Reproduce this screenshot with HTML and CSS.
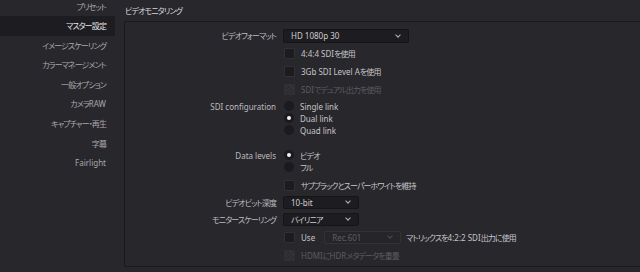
FILE: index.html
```html
<!DOCTYPE html>
<html>

<head>
    <meta charset="utf-8">
    <link rel="stylesheet" href="styles.css">
</head>

<body>
    <div class="page">
        <div class="sidebar">
            <div class="navItem ja">プリセット</div>
            <div class="navItem ja selected">マスター設定</div>
            <div class="navItem ja">イメージスケーリング</div>
            <div class="navItem ja">カラーマネージメント</div>
            <div class="navItem ja">一般オプション</div>
            <div class="navItem"><span class="ja">カメラ</span>RAW</div>
            <div class="navItem ja">キャプチャー・再生</div>
            <div class="navItem ja">字幕</div>
            <div class="navItem">Fairlight</div>
        </div>

        <div class="content">
            <div class="sectionTitle ja">ビデオモニタリング</div>
            <div class="box">
                <div class="row rowFormat">
                    <div class="label ja">ビデオフォーマット</div>
                    <div class="select wide"><span>HD 1080p 30</span><span class="chev"></span></div>
                </div>
                <div class="row rowCheck">
                    <div class="label"></div>
                    <span class="check"></span><span class="opt">4:4:4 SDI<span class="ja">を使用</span></span>
                </div>
                <div class="row rowCheck">
                    <div class="label"></div>
                    <span class="check"></span><span class="opt">3Gb SDI Level A<span class="ja">を使用</span></span>
                </div>
                <div class="row rowCheck">
                    <div class="label"></div>
                    <span class="check disabled"></span><span class="opt off">SDI<span class="ja">でデュアル出力を使用</span></span>
                </div>

                <div class="group sdiGroup">
                    <div class="row rowRadio">
                        <div class="label">SDI configuration</div>
                        <span class="radio"></span><span class="opt">Single link</span>
                    </div>
                    <div class="row rowRadio">
                        <div class="label"></div>
                        <span class="radio on"></span><span class="opt">Dual link</span>
                    </div>
                    <div class="row rowRadio">
                        <div class="label"></div>
                        <span class="radio"></span><span class="opt">Quad link</span>
                    </div>
                </div>

                <div class="group levelGroup">
                    <div class="row rowRadio">
                        <div class="label">Data levels</div>
                        <span class="radio on"></span><span class="opt ja">ビデオ</span>
                    </div>
                    <div class="row rowRadio">
                        <div class="label"></div>
                        <span class="radio"></span><span class="opt ja">フル</span>
                    </div>
                </div>

                <div class="row rowCheck subRow">
                    <div class="label"></div>
                    <span class="check"></span><span class="opt ja">サブブラックとスーパーホワイトを維持</span>
                </div>
                <div class="row rowSelect">
                    <div class="label ja">ビデオビット深度</div>
                    <div class="select narrow"><span>10-bit</span><span class="chev"></span></div>
                </div>
                <div class="row rowSelect">
                    <div class="label ja">モニタースケーリング</div>
                    <div class="select narrow"><span class="ja">バイリニア</span><span class="chev"></span></div>
                </div>
                <div class="row rowCheck">
                    <div class="label"></div>
                    <span class="check"></span><span class="opt">Use</span>
                    <div class="select small off"><span>Rec.601</span><span class="chev"></span></div>
                    <span class="opt"><span class="ja">マトリックスを</span>4:2:2 SDI<span class="ja">出力に使用</span></span>
                </div>
                <div class="row rowCheck">
                    <div class="label"></div>
                    <span class="check disabled"></span><span class="opt off">HDMI<span class="ja">に</span>HDR<span class="ja">メタデータを重畳</span></span>
                </div>
            </div>
        </div>
    </div>
</body>

</html>
```

FILE: styles.css
```css
html,
body {
    margin: 0;
    height: 100%;
    background-color: #28272c;
    overflow: hidden;
}

.page {
    display: flex;
    height: 272px;
    font-family: "Noto Sans", "Noto Sans CJK JP", sans-serif;
    font-size: 8px;
    font-feature-settings: "palt";
    color: #bdbcc0;
}

/* japanese glyphs in the original are narrower than noto's */
.ja {
    letter-spacing: -0.9px;
}

/* left menu, slightly scrolled so first item is cut */
.sidebar {
    width: 115px;
    flex-shrink: 0;
    margin-top: -3.5px;
}

.navItem {
    height: 19.6px;
    line-height: 19.6px;
    text-align: right;
    padding-right: 9px;
    color: #a9a8ad;
    white-space: nowrap;
}

.navItem.selected {
    background-color: #1d1c20;
    color: #e6e6e8;
}

.content {
    flex: 1;
    padding-left: 9px;
    min-width: 0;
}

.sectionTitle {
    height: 21px;
    line-height: 22px;
    padding-left: 1px;
    color: #d6d5d9;
}

.box {
    border: 1px solid #19181c;
    border-right: none;
    height: 246px;
    margin-right: -10px;
    padding-top: 5px;
    box-sizing: border-box;
}

.row {
    display: flex;
    align-items: center;
    white-space: nowrap;
}

.label {
    width: 151px;
    flex-shrink: 0;
    text-align: right;
    padding-right: 7px;
    color: #bcbbbf;
}

.rowFormat {
    height: 17px;
}

.rowCheck {
    height: 18px;
}

.rowRadio {
    height: 12px;
}

.rowSelect {
    height: 16px;
    margin-bottom: 1px;
}

.sdiGroup {
    margin-top: 2px;
}

.levelGroup {
    margin-top: 13px;
}

.subRow {
    margin-top: 3px;
}

.opt {
    color: #c6c5c9;
    margin-left: 6px;
}

.opt.off {
    color: #5d5c61;
}

.check {
    width: 9px;
    height: 9px;
    margin-left: 1px;
    background-color: #1c1b1f;
    border: 1px solid #323136;
    border-radius: 1px;
}

.check.disabled {
    background-color: #2d2c31;
    border-color: #313035;
    background-image: repeating-linear-gradient(45deg, #36353a 0 1px, transparent 1px 3px);
}

.radio {
    width: 10px;
    height: 10px;
    margin-left: 1px;
    border-radius: 50%;
    background-color: #1b1a1e;
    display: flex;
    align-items: center;
    justify-content: center;
}

.radio.on::after {
    content: "";
    width: 4px;
    height: 4px;
    border-radius: 50%;
    background-color: #f2f2f2;
}

.select {
    height: 13px;
    display: flex;
    align-items: center;
    justify-content: space-between;
    background-color: #1d1c20;
    border: 1px solid #151417;
    border-radius: 2px;
    padding: 0 8px 0 7px;
    box-sizing: border-box;
    color: #cfced2;
}

.select.wide {
    width: 126px;
    height: 14px;
}

.select.narrow {
    width: 76px;
}

.select.small {
    width: 77px;
    margin-left: 9px;
    background-color: #262529;
    border-color: #333237;
    color: #5f5e63;
}

.select.small + .opt {
    margin-left: 5px;
}

.chev {
    width: 3px;
    height: 3px;
    border-right: 1px solid #b5b4b8;
    border-bottom: 1px solid #b5b4b8;
    transform: rotate(45deg);
    margin-top: -2px;
}

.select.off .chev {
    border-color: #4f4e53;
}
```
